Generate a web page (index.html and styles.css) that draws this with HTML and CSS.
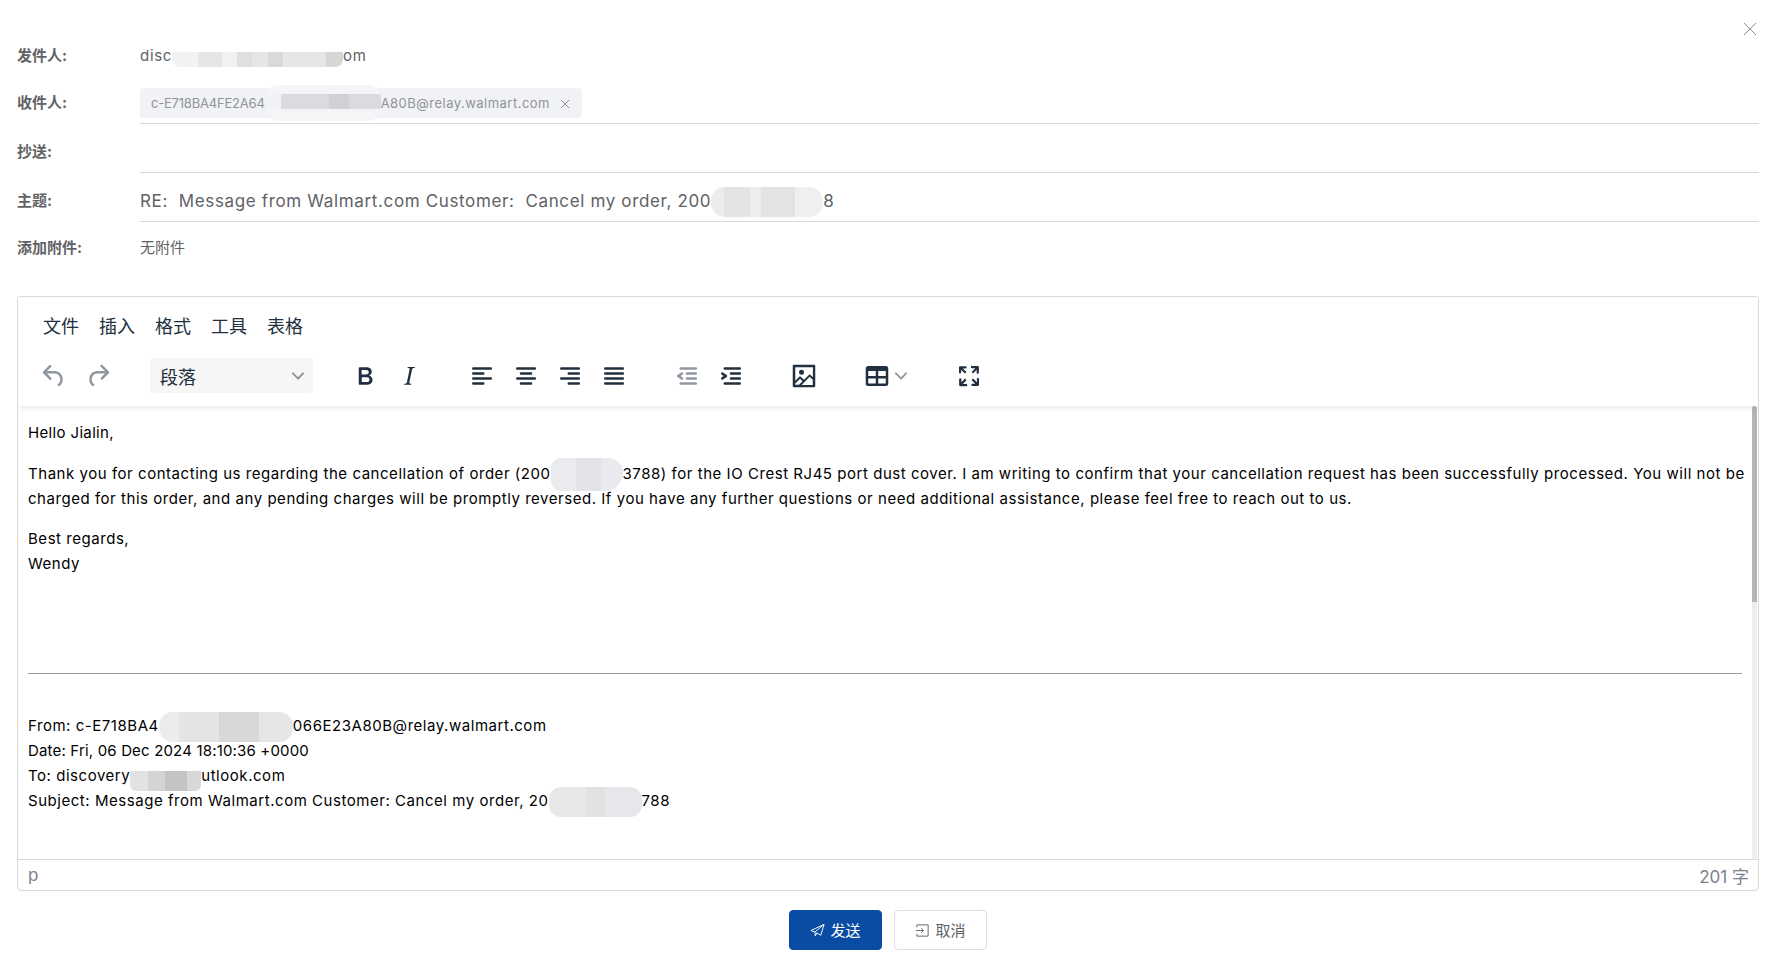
FILE: index.html
```html
<!DOCTYPE html>
<html lang="zh-CN">
<head>
<meta charset="utf-8">
<title>回复邮件</title>
<link rel="stylesheet" href="styles.css">
</head>
<body>
<div class="dialog">
  <button class="close" aria-label="关闭"><svg viewBox="0 0 14 14" width="14" height="14"><path d="M1 1l12 12M13 1L1 13" class="thin"/></svg></button>
  <div class="row row-first">
    <div class="label">发件人:</div>
    <div class="value small email">disc<span class="redact r-sender"></span>om</div>
  </div>
  <div class="row row-line row-to">
    <div class="label">收件人:</div>
    <div class="value"><span class="tag">c-E718BA4FE2A64<span class="redact r-tag"></span><span class="tag-tail">A80B@relay.walmart.com</span><svg class="tag-x" viewBox="0 0 10 10" width="10" height="10"><path d="M1 1l8 8M9 1L1 9" class="thin"/></svg></span></div>
  </div>
  <div class="row row-line">
    <div class="label">抄送:</div>
    <div class="value"></div>
  </div>
  <div class="row row-line">
    <div class="label">主题:</div>
    <div class="value subject">RE:&nbsp; Message from Walmart.com Customer:&nbsp; Cancel my order, 200<span class="redact r-subject"></span>8</div>
  </div>
  <div class="row row-last">
    <div class="label">添加附件:</div>
    <div class="value small">无附件</div>
  </div>

  <div class="editor">
    <div class="header">
      <div class="menubar">
        <span class="menu">文件</span><span class="menu">插入</span><span class="menu">格式</span><span class="menu">工具</span><span class="menu">表格</span>
      </div>
      <div class="toolbar">
        <div class="group group-history">
          <span class="tb off"><svg class="ic" viewBox="0 0 24 24"><path d="M6.4 8H12c3.7 0 6.2 2 6.8 5.1.6 2.7-.4 5.6-2.3 6.8a1 1 0 0 1-1-1.8c1.1-.6 1.8-2.7 1.4-4.6-.5-2.1-2.1-3.5-4.9-3.5H6.4l3.3 3.3a1 1 0 1 1-1.4 1.4l-5-5a1 1 0 0 1 0-1.4l5-5a1 1 0 0 1 1.4 1.4L6.4 8z"/></svg></span>
          <span class="tb off"><svg class="ic" viewBox="0 0 24 24"><path d="M17.6 10H12c-2.8 0-4.4 1.4-4.9 3.5-.4 2 .3 4 1.4 4.6a1 1 0 1 1-1 1.8c-2-1.2-2.9-4.1-2.3-6.8.6-3 3-5.1 6.8-5.1h5.6l-3.3-3.3a1 1 0 1 1 1.4-1.4l5 5a1 1 0 0 1 0 1.4l-5 5a1 1 0 0 1-1.4-1.4l3.3-3.3z"/></svg></span>
        </div>
        <div class="group">
          <div class="select"><span>段落</span><svg class="chev" viewBox="0 0 10 10"><path d="M8.7 2.2c.3-.3.8-.3 1 0 .4.4.4.9 0 1.2L5.7 7.8c-.3.3-.9.3-1.2 0L.2 3.4a.8.8 0 0 1 0-1.2c.3-.3.8-.3 1.1 0L5 6l3.7-3.8z"/></svg></div>
        </div>
        <div class="group">
          <span class="tb"><svg class="ic" viewBox="0 0 24 24"><path d="M7.8 19c-.3 0-.5 0-.6-.2l-.2-.5V5.7c0-.2 0-.4.2-.5l.6-.2h5c1.5 0 2.7.3 3.5 1 .7.6 1.1 1.4 1.1 2.5a3 3 0 0 1-.6 1.9c-.4.6-1 1-1.6 1.2.4.1.9.3 1.3.6s.8.7 1 1.2c.4.4.5 1 .5 1.6 0 1.3-.4 2.3-1.3 3-.8.7-2.1 1-3.8 1H7.8zm5-8.3c.6 0 1.2-.1 1.6-.5.4-.3.6-.7.6-1.3 0-1.1-.8-1.7-2.3-1.7H9.3v3.5h3.4zm.5 6c.7 0 1.3-.1 1.7-.4.4-.4.6-.9.6-1.5s-.2-1-.7-1.4c-.4-.3-1-.4-2-.4H9.4v3.8h4z"/></svg></span>
          <span class="tb"><svg class="ic" viewBox="0 0 24 24"><path d="M16.7 4.7l-.1.9h-.3c-.6 0-1 0-1.4.3-.3.3-.4.6-.5 1.1l-2.1 9.8v.6c0 .5.4.8 1.4.8h.2l-.2.8H8l.2-.8h.2c1.1 0 1.8-.5 2-1.5l2-9.8.1-.5c0-.6-.4-.8-1.4-.8h-.3l.2-.9h5.8z"/></svg></span>
        </div>
        <div class="group">
          <span class="tb"><svg class="ic" viewBox="0 0 24 24"><path d="M5 5h14c.6 0 1 .4 1 1s-.4 1-1 1H5a1 1 0 1 1 0-2zm0 4h8c.6 0 1 .4 1 1s-.4 1-1 1H5a1 1 0 1 1 0-2zm0 8h8c.6 0 1 .4 1 1s-.4 1-1 1H5a1 1 0 0 1 0-2zm0-4h14c.6 0 1 .4 1 1s-.4 1-1 1H5a1 1 0 0 1 0-2z"/></svg></span>
          <span class="tb"><svg class="ic" viewBox="0 0 24 24"><path d="M5 5h14c.6 0 1 .4 1 1s-.4 1-1 1H5a1 1 0 1 1 0-2zm3 4h8c.6 0 1 .4 1 1s-.4 1-1 1H8a1 1 0 1 1 0-2zm0 8h8c.6 0 1 .4 1 1s-.4 1-1 1H8a1 1 0 0 1 0-2zm-3-4h14c.6 0 1 .4 1 1s-.4 1-1 1H5a1 1 0 0 1 0-2z"/></svg></span>
          <span class="tb"><svg class="ic" viewBox="0 0 24 24"><path d="M5 5h14c.6 0 1 .4 1 1s-.4 1-1 1H5a1 1 0 1 1 0-2zm6 4h8c.6 0 1 .4 1 1s-.4 1-1 1h-8a1 1 0 0 1 0-2zm0 8h8c.6 0 1 .4 1 1s-.4 1-1 1h-8a1 1 0 0 1 0-2zm-6-4h14c.6 0 1 .4 1 1s-.4 1-1 1H5a1 1 0 0 1 0-2z"/></svg></span>
          <span class="tb"><svg class="ic" viewBox="0 0 24 24"><path d="M5 5h14c.6 0 1 .4 1 1s-.4 1-1 1H5a1 1 0 1 1 0-2zm0 4h14c.6 0 1 .4 1 1s-.4 1-1 1H5a1 1 0 1 1 0-2zm0 4h14c.6 0 1 .4 1 1s-.4 1-1 1H5a1 1 0 0 1 0-2zm0 4h14c.6 0 1 .4 1 1s-.4 1-1 1H5a1 1 0 0 1 0-2z"/></svg></span>
        </div>
        <div class="group">
          <span class="tb off"><svg class="ic" viewBox="0 0 24 24"><path d="M7 5h12c.6 0 1 .4 1 1s-.4 1-1 1H7a1 1 0 1 1 0-2zm5 4h7c.6 0 1 .4 1 1s-.4 1-1 1h-7a1 1 0 0 1 0-2zm0 4h7c.6 0 1 .4 1 1s-.4 1-1 1h-7a1 1 0 0 1 0-2zm-5 4h12a1 1 0 0 1 0 2H7a1 1 0 0 1 0-2zm1.6-3.8a1 1 0 0 1-1.2 1.6l-3-2a1 1 0 0 1 0-1.6l3-2a1 1 0 0 1 1.2 1.6L6.8 12l1.8 1.2z"/></svg></span>
          <span class="tb"><svg class="ic" viewBox="0 0 24 24"><path d="M7 5h12c.6 0 1 .4 1 1s-.4 1-1 1H7a1 1 0 1 1 0-2zm5 4h7c.6 0 1 .4 1 1s-.4 1-1 1h-7a1 1 0 0 1 0-2zm0 4h7c.6 0 1 .4 1 1s-.4 1-1 1h-7a1 1 0 0 1 0-2zm-5 4h12a1 1 0 0 1 0 2H7a1 1 0 0 1 0-2zm-2.6-3.8L6.2 12l-1.8-1.2a1 1 0 0 1 1.2-1.6l3 2a1 1 0 0 1 0 1.6l-3 2a1 1 0 1 1-1.2-1.6z"/></svg></span>
        </div>
        <div class="group">
          <span class="tb"><svg class="ic" viewBox="0 0 24 24"><path d="M5 15.7l3.3-3.2c.3-.3.7-.3 1 0L12 15l4.1-4c.3-.4.8-.4 1 0l2 1.9V5H5v10.7zM5 18V19h3l2.8-2.9-2-2L5 17.9zm14-3l-2.5-2.4-6.4 6.5H19v-4zM4 3h16c.6 0 1 .4 1 1v16c0 .6-.4 1-1 1H4a1 1 0 0 1-1-1V4c0-.6.4-1 1-1zm6 8a2 2 0 1 0 0-4 2 2 0 0 0 0 4z"/></svg></span>
        </div>
        <div class="group">
          <span class="tb tb-split"><svg class="ic" viewBox="0 0 24 24"><path d="M19 4a2 2 0 0 1 2 2v12a2 2 0 0 1-2 2H5a2 2 0 0 1-2-2V6c0-1.1.9-2 2-2h14zM5 14v4h6v-4H5zm14 0h-6v4h6v-4zm0-6h-6v4h6V8zM5 12h6V8H5v4z"/></svg><svg class="chev" viewBox="0 0 10 10"><path d="M8.7 2.2c.3-.3.8-.3 1 0 .4.4.4.9 0 1.2L5.7 7.8c-.3.3-.9.3-1.2 0L.2 3.4a.8.8 0 0 1 0-1.2c.3-.3.8-.3 1.1 0L5 6l3.7-3.8z"/></svg></span>
        </div>
        <div class="group">
          <span class="tb"><svg class="ic" viewBox="0 0 24 24"><path d="M15.3 10l-1.2-1.3 2.9-3h-2.3a.9.9 0 1 1 0-1.7H19c.5 0 .9.4.9.9v4.4a.9.9 0 1 1-1.8 0V7l-2.9 3zm0 4l3 3v-2.3a.9.9 0 1 1 1.7 0V19c0 .5-.4.9-.9.9h-4.4a.9.9 0 1 1 0-1.8H17l-3-2.9 1.3-1.2zM10 15.4l-2.9 3h2.3a.9.9 0 1 1 0 1.7H5a.9.9 0 0 1-.9-.9v-4.4a.9.9 0 1 1 1.8 0V17l2.9-3 1.2 1.3zM8.7 10L5.7 7v2.3a.9.9 0 0 1-1.7 0V5c0-.5.4-.9.9-.9h4.4a.9.9 0 0 1 0 1.8H7l3 2.9-1.3 1.2z"/></svg></span>
        </div>
      </div>
    </div>
    <div class="content">
      <div class="scroll-thumb"></div>
      <p class="greeting">Hello Jialin,</p>
      <p>Thank you for contacting us regarding the cancellation of order (200<span class="redact r-order"></span>3788) for the IO Crest RJ45 port dust cover. I am writing to confirm that your cancellation request has been successfully processed. You will not be charged for this order, and any pending charges will be promptly reversed. If you have any further questions or need additional assistance, please feel free to reach out to us.</p>
      <p>Best regards,<br>Wendy</p>
      <hr>
      <p>From: c-E718BA4<span class="redact r-from"></span>066E23A80B@relay.walmart.com<br><span class="date-line">Date: Fri, 06 Dec 2024 18:10:36 +0000</span><br>To: discovery<span class="redact r-to"></span>utlook.com<br>Subject: Message from Walmart.com Customer: Cancel my order, 20<span class="redact r-subj2"></span>788</p>
    </div>
    <div class="status">
      <span>p</span>
      <span class="count">201 字</span>
    </div>
  </div>

  <div class="actions">
    <button class="btn primary"><svg viewBox="0 0 16 16" width="15" height="15"><path class="thin" d="M15 1.5L1 8l4.2 1.6L15 1.5zM15 1.5L11.5 13 7.2 10.6M5.2 9.6l.5 4.2 1.5-3.2"/></svg><span class="btn-text">发送</span></button>
    <button class="btn"><svg viewBox="0 0 16 16" width="15" height="15"><path class="thin" d="M2 4.5V2h12v12H2v-2.500M1 8h8M6.500 5.500L9 8l-2.500 2.500"/></svg><span class="btn-text">取消</span></button>
  </div>
</div>
</body>
</html>
```

FILE: styles.css
```css
* { box-sizing: border-box; }
html, body { margin: 0; height: 100%; background: #fff; overflow: hidden; }
body { font-family: Inter, "Noto Sans CJK SC", sans-serif; }

.dialog { position: relative; height: 968px; padding: 41px 17px 0; }

.close { position: absolute; top: 22px; right: 19px; width: 14px; height: 14px; padding: 0; border: 0; background: none; line-height: 0; color: #8a8d96; }
.thin { fill: none; stroke: currentColor; stroke-width: 1; }

.row { display: flex; height: 49px; padding-top: 13px; }
.row-first { height: 30px; padding-top: 0; }
.row-to { height: 53px; padding-top: 17px; }
.row-last { height: 41px; padding-top: 11px; }
.label { width: 123px; font-size: 15px; line-height: 30px; font-weight: 700; color: #606266; }
.value { flex: 1; height: 30px; line-height: 30px; color: #606266; white-space: nowrap; }
.row-line .value { height: 36px; border-bottom: 1px solid #d9d9d9; }
.small { font-size: 15px; }
.email { letter-spacing: .7px; }
.row-first .value { height: 30px; }
.subject { font-size: 17px; letter-spacing: .64px; }

.tag { display: inline-flex; align-items: center; height: 30px; padding: 0 12px 0 11px; border-radius: 4px; background: #f1f2f5; color: #909399; font-size: 13px; letter-spacing: -.2px; line-height: 30px; vertical-align: top; }
.tag-tail { letter-spacing: .48px; }
.tag-x { margin-left: 10px; color: #909399; margin-top: 2px; }

.redact { display: inline-block; vertical-align: middle; background-repeat: no-repeat; }
.r-sender { width: 171px; height: 25px; margin: -13px 0 -8px; border-radius: 0 0 8px 8px; background:
  linear-gradient(#fff 0 10px, transparent 10px),
  linear-gradient(90deg, #f2f2f2 0 15%, #e6e6e6 15% 29%, #f1f1f1 29% 38%, #dfdfdf 38% 47%, #e6e6e6 47% 56%, #d9d9d9 56% 65%, #e6e6e6 65% 90%, #d6d6d6 90%); }
.r-tag { width: 116px; height: 36px; margin: -18px 0; border-radius: 14px; background:
  linear-gradient(#f4f5f7 0 9px, transparent 9px, transparent 24px, #f4f5f7 24px),
  linear-gradient(90deg, #f1f2f5 0 14%, #d9dbde 14% 55%, #cfd1d5 55% 72%, #d9dbde 72%); }
.r-subject { width: 112px; height: 30px; margin: -15px 0; border-radius: 14px; background:
  linear-gradient(90deg, #ececec 0 12%, #e3e3e3 12% 35%, #ededed 35% 45%, #e3e3e3 45% 75%, #efefef 75%); }
.r-order { width: 72px; height: 33px; margin: -17px 0; border-radius: 12px 18px 22px 12px; background:
  linear-gradient(90deg, #e9ebee 0 35%, #e2e4e8 35% 70%, #e8eaee 70%); }
.r-from { width: 134px; height: 30px; margin: -15px 0; border-radius: 14px; background:
  linear-gradient(90deg, #ececec 0 15%, #e3e4e6 15% 45%, #d6d8da 45% 75%, #e6e6e6 75%); }
.r-to { width: 71px; height: 28px; margin: -14px 0; border-radius: 0 0 6px 6px; background:
  linear-gradient(#fff 0 8px, transparent 8px),
  linear-gradient(90deg, #e2e2e2 0 25%, #d4d4d4 25% 50%, #c4c4c4 50% 80%, #d8d8d8 80%); }
.r-subj2 { width: 93px; height: 30px; margin: -15px 0; border-radius: 12px; background:
  linear-gradient(90deg, #e8e8e8 0 40%, #e2e2e2 40% 60%, #e6e7ea 60%); }

.editor { display: flex; flex-direction: column; height: 595px; margin-top: 33px; border: 1px solid #d9d9d9; border-radius: 4px; overflow: hidden; }
.header { position: relative; z-index: 1; height: 109px; box-shadow: 0 2px 6px rgba(34, 47, 62, .1); background: #fff; flex: none; }
.menubar { display: flex; height: 48px; padding: 11px 0 0 15px; }
.menu { width: 56px; text-align: center; font-size: 18px; line-height: 37px; color: #222f3e; }
.toolbar { display: flex; align-items: center; gap: 29px; height: 61px; padding-left: 14px; }
.group { display: flex; }
.group-history { margin-right: 1px; }
.tb { display: flex; align-items: center; justify-content: center; width: 44px; height: 35px; }
.tb-split { width: 63px; justify-content: flex-start; padding-left: 7px; gap: 3px; }
.ic { width: 30px; height: 30px; fill: #222f3e; }
.off .ic { fill: rgba(34, 47, 62, .5); }
.chev { width: 12px; height: 12px; fill: rgba(34, 47, 62, .5); }
.select { display: flex; align-items: center; justify-content: space-between; width: 163px; height: 35px; margin-right: 1px; padding: 0 9px 0 10px; background: #f6f6f6; border-radius: 4px; font-size: 18px; color: #222f3e; }

.content { position: relative; flex: 1; padding: 14px 10px 0 10px; overflow: hidden; font-size: 15px; line-height: 25px; color: #000; letter-spacing: .54px; }
.content p { margin: 0 0 15px; }
.content .greeting { margin-bottom: 16px; letter-spacing: .35px; }
.date-line { letter-spacing: .17px; }
.content hr { height: 1px; margin: 97px 0 39px; border: 0; background: #9a9a9a; width: 1714px; }
.scroll-thumb { position: absolute; top: 0; right: 1px; bottom: 0; width: 5px; background: linear-gradient(#b5b5b5 0 196px, #ededed 196px); border-radius: 3px; }

.status { flex: none; display: flex; align-items: center; justify-content: space-between; height: 31px; padding: 0 9px 0 10px; border-top: 1px solid #d9d9d9; font-size: 17px; color: #7a828c; }

.actions { display: flex; justify-content: center; gap: 12px; margin-top: 19px; }
.btn { display: flex; align-items: center; justify-content: center; gap: 5px; width: 93px; height: 40px; padding: 0; border: 1px solid #dcdfe6; border-radius: 4px; background: #fff; color: #606266; font: 15px Inter, "Noto Sans CJK SC", sans-serif; }
.btn-text { position: relative; top: -1px; }
.btn.primary { border-color: #0a4ba4; background: #0a4ba4; color: #fff; }
```
